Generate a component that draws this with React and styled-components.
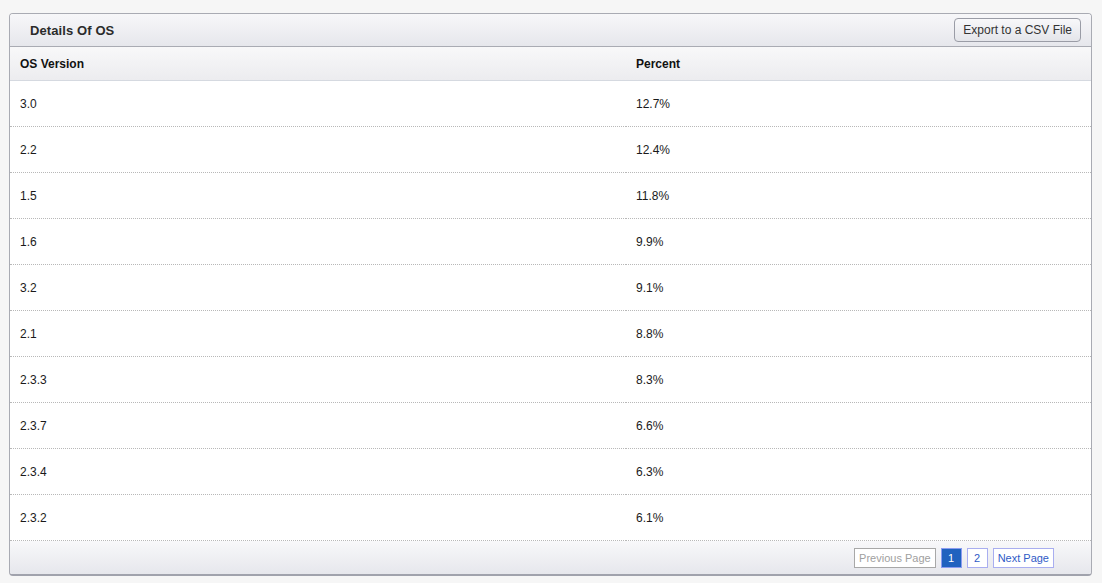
import React from 'react';
import styled, { createGlobalStyle } from 'styled-components';

const Global = createGlobalStyle`
  body {
    margin: 0;
    background: #f6f6f6;
    font-family: "Liberation Sans", Arial, sans-serif;
    font-size: 12px;
    color: #222;
  }
`;

const Page = styled.div`
  padding: 13px 10px 0 9px;
`;

const Panel = styled.div`
  width: 1081px;
  border: 1px solid #a9abb3;
  border-bottom: 2px solid #a0a2ac;
  border-radius: 4px;
  background: #fff;
  overflow: hidden;
`;

const PanelHead = styled.div`
  height: 32px;
  display: flex;
  align-items: center;
  justify-content: space-between;
  padding: 0 10px 0 20px;
  background: linear-gradient(#f7f7f9, #e6e7ec);
  border-bottom: 1px solid #a9abb3;
`;

const Title = styled.h2`
  margin: 0;
  font-size: 13px;
  font-weight: bold;
  color: #2b2b2b;
  letter-spacing: 0.1px;
`;

const ExportBtn = styled.button`
  height: 24px;
  padding: 0 8px;
  font-family: inherit;
  font-size: 12px;
  color: #333;
  border: 1px solid #9a9ca6;
  border-radius: 4px;
  background: linear-gradient(#f8f8fa, #e4e5ea);
`;

const Table = styled.table`
  width: 100%;
  border-collapse: collapse;
`;

const Th = styled.th`
  height: 33px;
  text-align: left;
  font-weight: bold;
  font-size: 12px;
  color: #111;
  padding: 0 10px;
  background: linear-gradient(#f8f8f9, #ececef);
  border-bottom: 1px solid #d5d9e0;
  width: ${(p) => p.$w || 'auto'};
`;

const Td = styled.td`
  height: 45px;
  padding: 0 10px;
  font-size: 12px;
  color: #1a1a1a;
  border-bottom: 1px dotted #b8b8b8;
`;

const Footer = styled.div`
  height: 33px;
  display: flex;
  align-items: center;
  justify-content: flex-end;
  gap: 5px;
  padding-right: 37px;
  background: linear-gradient(#f8f8fa, #e6e7ec);
`;

const PageBtn = styled.span`
  height: 18px;
  line-height: 18px;
  padding: 0 4px;
  min-width: 11px;
  text-align: center;
  font-size: 11px;
  border: 1px solid ${(p) => (p.$disabled ? '#a8a8a8' : p.$active ? '#8a9cf0' : '#a9aef0')};
  background: ${(p) => (p.$active ? '#2062bf' : '#fff')};
  color: ${(p) => (p.$disabled ? '#a0a0a0' : p.$active ? '#fff' : '#2f5bc7')};
`;

const rows = [
  ['3.0', '12.7%'],
  ['2.2', '12.4%'],
  ['1.5', '11.8%'],
  ['1.6', '9.9%'],
  ['3.2', '9.1%'],
  ['2.1', '8.8%'],
  ['2.3.3', '8.3%'],
  ['2.3.7', '6.6%'],
  ['2.3.4', '6.3%'],
  ['2.3.2', '6.1%'],
];

export default function App() {
  return (
    <Page>
      <Global />
      <Panel>
        <PanelHead>
          <Title>Details Of OS</Title>
          <ExportBtn>Export to a CSV File</ExportBtn>
        </PanelHead>
        <Table>
          <thead>
            <tr>
              <Th $w="596px">OS Version</Th>
              <Th>Percent</Th>
            </tr>
          </thead>
          <tbody>
            {rows.map(([v, p]) => (
              <tr key={v}>
                <Td>{v}</Td>
                <Td>{p}</Td>
              </tr>
            ))}
          </tbody>
        </Table>
        <Footer>
          <PageBtn $disabled>Previous Page</PageBtn>
          <PageBtn $active>1</PageBtn>
          <PageBtn>2</PageBtn>
          <PageBtn>Next Page</PageBtn>
        </Footer>
      </Panel>
    </Page>
  );
}
